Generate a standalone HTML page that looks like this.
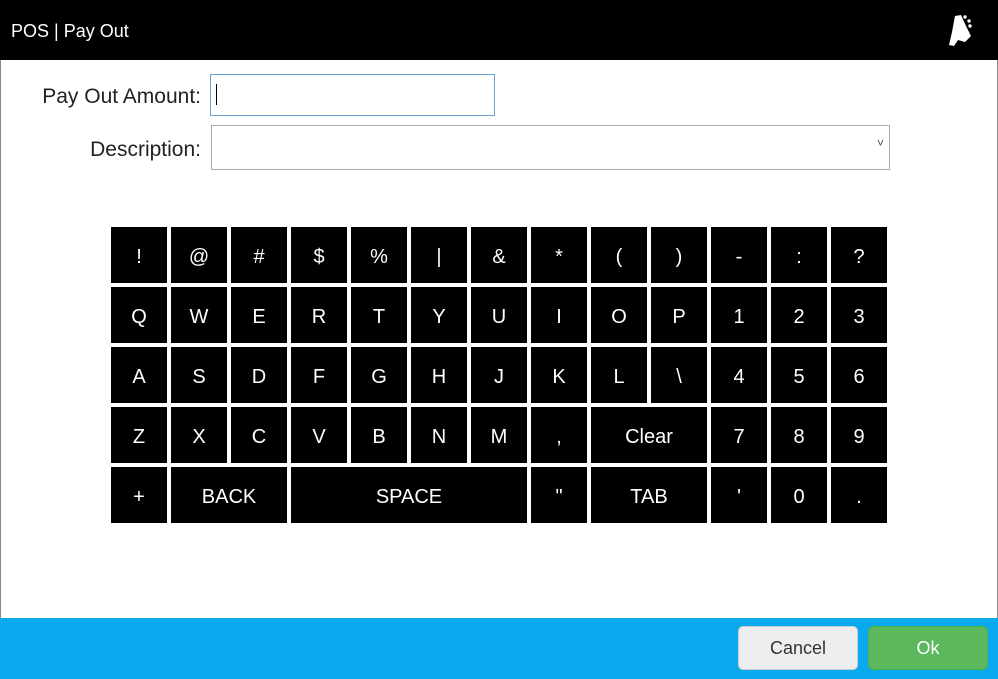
<!DOCTYPE html>
<html><head><style>
body{margin:0;width:998px;height:679px;position:relative;background:#fff;font-family:"Liberation Sans",sans-serif;overflow:hidden}
.win{position:absolute;left:0;top:0;width:996px;height:677px;border:1px solid #8a8a8a}
.hdr{position:absolute;left:0;top:0;width:998px;height:60px;background:#000;color:#fff}
.hdr .t{position:absolute;left:11px;top:21px;font-size:18px}
.lbl{position:absolute;font-size:21px;color:#222;text-align:right;width:200px}
.k{position:absolute;background:#000;color:#fff;font-size:20px;display:flex;align-items:center;justify-content:center;height:52px;padding-top:4px}
.foot{position:absolute;left:0;top:618px;width:998px;height:61px;background:#0aabee}
.btn{position:absolute;top:626px;width:118px;height:42px;border-radius:5px;font-size:18px;display:flex;align-items:center;justify-content:center}
</style></head><body>
<div class="win"></div>
<div class="hdr"><div class="t">POS | Pay Out</div>
<svg style="position:absolute;left:944px;top:12px" width="34" height="36" viewBox="0 0 32 36"><path d="M10 4 L16 3 L21 14 L26 24 L20 30 L13 28 L9 34 L4 33 L7 20 Z" fill="#fff"/><circle cx="20" cy="5" r="1.7" fill="#fff"/><circle cx="24" cy="9" r="1.7" fill="#fff"/><circle cx="25" cy="14" r="1.7" fill="#fff"/></svg>
</div>
<div class="lbl" style="left:1px;top:85px">Pay Out Amount:</div>
<div style="position:absolute;left:210px;top:74px;width:283px;height:40px;border:1px solid #6a9fd4"><div style="position:absolute;left:5px;top:9px;width:1px;height:21px;background:#000"></div></div>
<div class="lbl" style="left:1px;top:138px">Description:</div>
<div style="position:absolute;left:211px;top:125px;width:677px;height:43px;border:1px solid #aaa"><span style="position:absolute;right:5px;top:10px;font-size:12px;color:#555">˅</span></div>
<div id="kb"></div>
<div class="foot"></div>
<div class="btn" style="left:738px;background:#eeeef0;border:1px solid #ccc;color:#333">Cancel</div>
<div class="btn" style="left:868px;background:#5cb85c;border:1px solid #4cae4c;color:#fff">Ok</div>
<script>
var rows=[
[["!",1],["@",1],["#",1],["$",1],["%",1],["|",1],["&",1],["*",1],["(",1],[")",1],["-",1],[":",1],["?",1]],
[["Q",1],["W",1],["E",1],["R",1],["T",1],["Y",1],["U",1],["I",1],["O",1],["P",1],["1",1],["2",1],["3",1]],
[["A",1],["S",1],["D",1],["F",1],["G",1],["H",1],["J",1],["K",1],["L",1],["\\",1],["4",1],["5",1],["6",1]],
[["Z",1],["X",1],["C",1],["V",1],["B",1],["N",1],["M",1],[",",1],["Clear",2],["7",1],["8",1],["9",1]],
[["+",1],["BACK",2],["SPACE",4],["\"",1],["TAB",2],["'",1],["0",1],[".",1]]];
var h="";rows.forEach(function(r,ri){var c=0;r.forEach(function(k){h+='<div class="k" style="left:'+(111+c*60)+'px;top:'+(227+ri*60)+'px;width:'+(k[1]*60-4)+'px">'+k[0].replace(/&/,"&amp;")+'</div>';c+=k[1];});});
document.getElementById("kb").innerHTML=h;
</script>
</body></html>
